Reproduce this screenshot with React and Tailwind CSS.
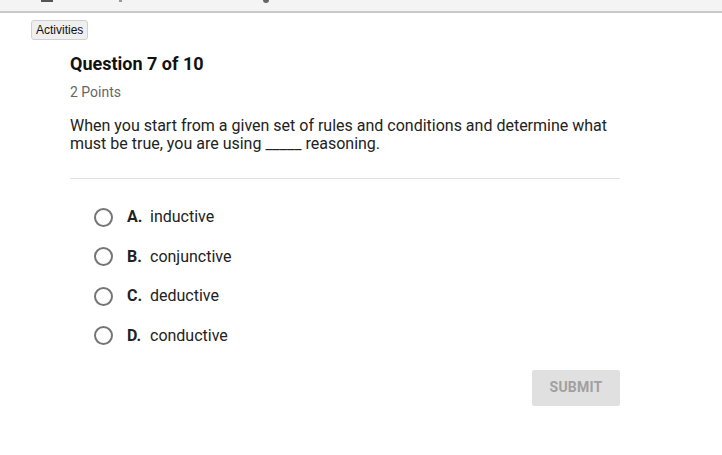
import React from "react";

const options = [
  { letter: "A.", text: "inductive" },
  { letter: "B.", text: "conjunctive" },
  { letter: "C.", text: "deductive" },
  { letter: "D.", text: "conductive" },
];

export default function App() {
  return (
    <div className="w-[722px] h-[455px] bg-white overflow-hidden" style={{ fontFamily: "Roboto, 'Liberation Sans', sans-serif" }}>
      {/* top bar (cut off) */}
      <div className="relative h-[13px] bg-[#f4f4f4] border-b-2 border-[#c9c9c9]">
        <span className="absolute left-[41px] top-0 w-[12px] h-[2px] bg-[#555]" />
        <span className="absolute left-[119px] top-0 w-[3px] h-[2px] bg-[#999]" />
        <span className="absolute left-[263px] top-0 w-[6px] h-[3px] bg-[#666] rounded-b" />
      </div>

      <div className="flex pl-[31px] pt-[7px]">
        <button
          className="h-[20px] px-[4px] bg-[#efefef] border border-[#d0d0d0] rounded-[3px] text-[12px] leading-none text-[#111]"
          style={{ fontFamily: "'Liberation Sans', Arial, sans-serif" }}
        >
          Activities
        </button>
      </div>

      <div className="ml-[70px] w-[550px]">
        <div className="mt-[13px] text-[18px] font-bold leading-[22px] text-[#111]">Question 7 of 10</div>
        <div className="mt-[9px] text-[14px] leading-[16px] text-[#666]">2 Points</div>
        <div className="mt-[17px] text-[16px] leading-[18px] text-[#222] pb-[25px] border-b border-[#e2e2e2]">
          When you start from a given set of rules and conditions and determine what must be true, you are using _____ reasoning.
        </div>

        <div className="mt-[28px] ml-[24px] flex flex-col gap-[19.5px]">
          {options.map((o) => (
            <div key={o.letter} className="flex items-center h-[20px]">
              <span className="w-[19px] h-[19px] rounded-full border-2 border-[#757575] shrink-0" />
              <span className="ml-[14px] text-[16px] font-bold text-[#222] w-[23px]">{o.letter}</span>
              <span className="text-[16px] text-[#222]">{o.text}</span>
            </div>
          ))}
        </div>

        <div className="mt-[24px] flex justify-end">
          <button className="w-[88px] h-[36px] bg-[#e0e0e0] rounded-[2px] text-[14px] font-bold text-[#a0a0a0] tracking-[0.2px]">
            SUBMIT
          </button>
        </div>
      </div>
    </div>
  );
}
